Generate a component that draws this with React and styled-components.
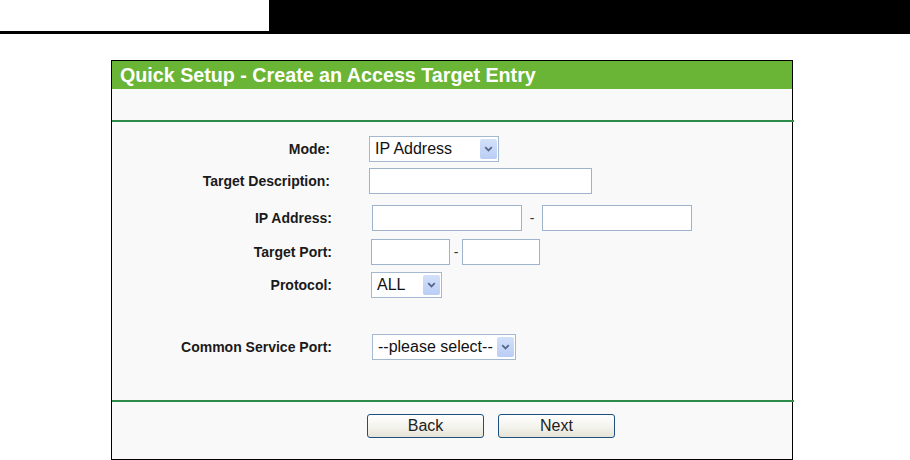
import React from "react";
import styled, { createGlobalStyle } from "styled-components";

const GlobalStyle = createGlobalStyle`
  html, body {
    margin: 0;
    padding: 0;
    background: #ffffff;
    font-family: "Liberation Sans", Arial, sans-serif;
  }
`;

const Page = styled.div`
  width: 910px;
  height: 460px;
  overflow: hidden;
`;

const TopBar = styled.div`
  display: flex;
  height: 34px;
`;

const TopLeft = styled.div`
  width: 269px;
  border-bottom: 3px solid #000;
  box-sizing: border-box;
`;

const TopRight = styled.div`
  flex: 1;
  background: #000;
`;

const Panel = styled.div`
  margin: 26px 0 0 111px;
  width: 682px;
  height: 400px;
  box-sizing: border-box;
  border: 1px solid #000;
  background: #f9f9f9;
  display: flex;
  flex-direction: column;
`;

const Header = styled.div`
  height: 28px;
  background: #6ab536;
  color: #fff;
  font-weight: bold;
  font-size: 19.7px;
  line-height: 28px;
  padding-left: 8px;
  white-space: nowrap;
`;

const SubBar = styled.div`
  height: 31px;
`;

const Divider = styled.div`
  height: 2px;
  background: #2e8b4a;
  margin-right: -2px;
`;

const Body = styled.div`
  padding-top: 14px;
  flex: 1;
`;

const Row = styled.div`
  display: flex;
  align-items: center;
  height: 26px;
  margin-top: ${(p) => p.$gap || 0}px;
`;

const Label = styled.div`
  width: 220px;
  text-align: right;
  font-weight: bold;
  font-size: 14px;
  color: #1a1a1a;
  padding-right: ${(p) => (p.$shift ? 0 : 2)}px;
  box-sizing: border-box;
  white-space: nowrap;
`;

const Controls = styled.div`
  display: flex;
  align-items: center;
  margin-left: ${(p) => p.$offset}px;
`;

const TextBox = styled.div`
  width: ${(p) => p.$w}px;
  height: 26px;
  box-sizing: border-box;
  border: 1px solid #9fb3cb;
  background: #fff;
`;

const Dash = styled.span`
  font-size: 14px;
  color: #333;
  width: ${(p) => p.$w}px;
  text-align: center;
`;

const SelectBox = styled.div`
  width: ${(p) => p.$w}px;
  height: 26px;
  box-sizing: border-box;
  border: 1px solid #a4b8d0;
  background: #fff;
  display: flex;
  align-items: center;
  justify-content: space-between;
  padding: 0 1px 0 5px;
  font-size: 16px;
  color: #111;
`;

const DropButton = styled.div`
  width: 17px;
  height: 20px;
  border-radius: 2px;
  background: linear-gradient(#d3e0f9, #b9cdf5);
  display: flex;
  align-items: center;
  justify-content: center;
`;

const ButtonRow = styled.div`
  display: flex;
  gap: 14px;
  padding: 12px 0 0 255px;
`;

const Button = styled.div`
  width: 117px;
  height: 24px;
  box-sizing: border-box;
  border: 1px solid #1d4f80;
  border-radius: 3px;
  background: linear-gradient(#ffffff, #f2f1ea 60%, #e6e3d6);
  font-size: 16px;
  color: #222;
  display: flex;
  align-items: center;
  justify-content: center;
`;

const Footer = styled.div`
  height: 21px;
`;

function Select({ width, children }) {
  return (
    <SelectBox $w={width}>
      <span>{children}</span>
      <DropButton>
        <svg width="9" height="6" viewBox="0 0 9 6">
          <path d="M1.2 1.2 L4.5 4.4 L7.8 1.2" fill="none" stroke="#55688c" strokeWidth="1.8" />
        </svg>
      </DropButton>
    </SelectBox>
  );
}

export default function App() {
  return (
    <Page>
      <GlobalStyle />
      <TopBar>
        <TopLeft />
        <TopRight />
      </TopBar>
      <Panel>
        <Header>Quick Setup - Create an Access Target Entry</Header>
        <SubBar />
        <Divider />
        <Body>
          <Row>
            <Label>Mode:</Label>
            <Controls $offset={37}>
              <Select width={130}>IP Address</Select>
            </Controls>
          </Row>
          <Row $gap={6}>
            <Label>Target Description:</Label>
            <Controls $offset={37}>
              <TextBox $w={223} />
            </Controls>
          </Row>
          <Row $gap={11}>
            <Label $shift>IP Address:</Label>
            <Controls $offset={40}>
              <TextBox $w={150} />
              <Dash $w={20}>-</Dash>
              <TextBox $w={150} />
            </Controls>
          </Row>
          <Row $gap={8}>
            <Label $shift>Target Port:</Label>
            <Controls $offset={39}>
              <TextBox $w={79} />
              <Dash $w={12}>-</Dash>
              <TextBox $w={78} />
            </Controls>
          </Row>
          <Row $gap={7}>
            <Label $shift>Protocol:</Label>
            <Controls $offset={39}>
              <Select width={71}>ALL</Select>
            </Controls>
          </Row>
          <Row $gap={36}>
            <Label $shift>Common Service Port:</Label>
            <Controls $offset={40}>
              <Select width={144}>--please select--</Select>
            </Controls>
          </Row>
        </Body>
        <Divider />
        <ButtonRow>
          <Button>Back</Button>
          <Button>Next</Button>
        </ButtonRow>
        <Footer />
      </Panel>
    </Page>
  );
}
